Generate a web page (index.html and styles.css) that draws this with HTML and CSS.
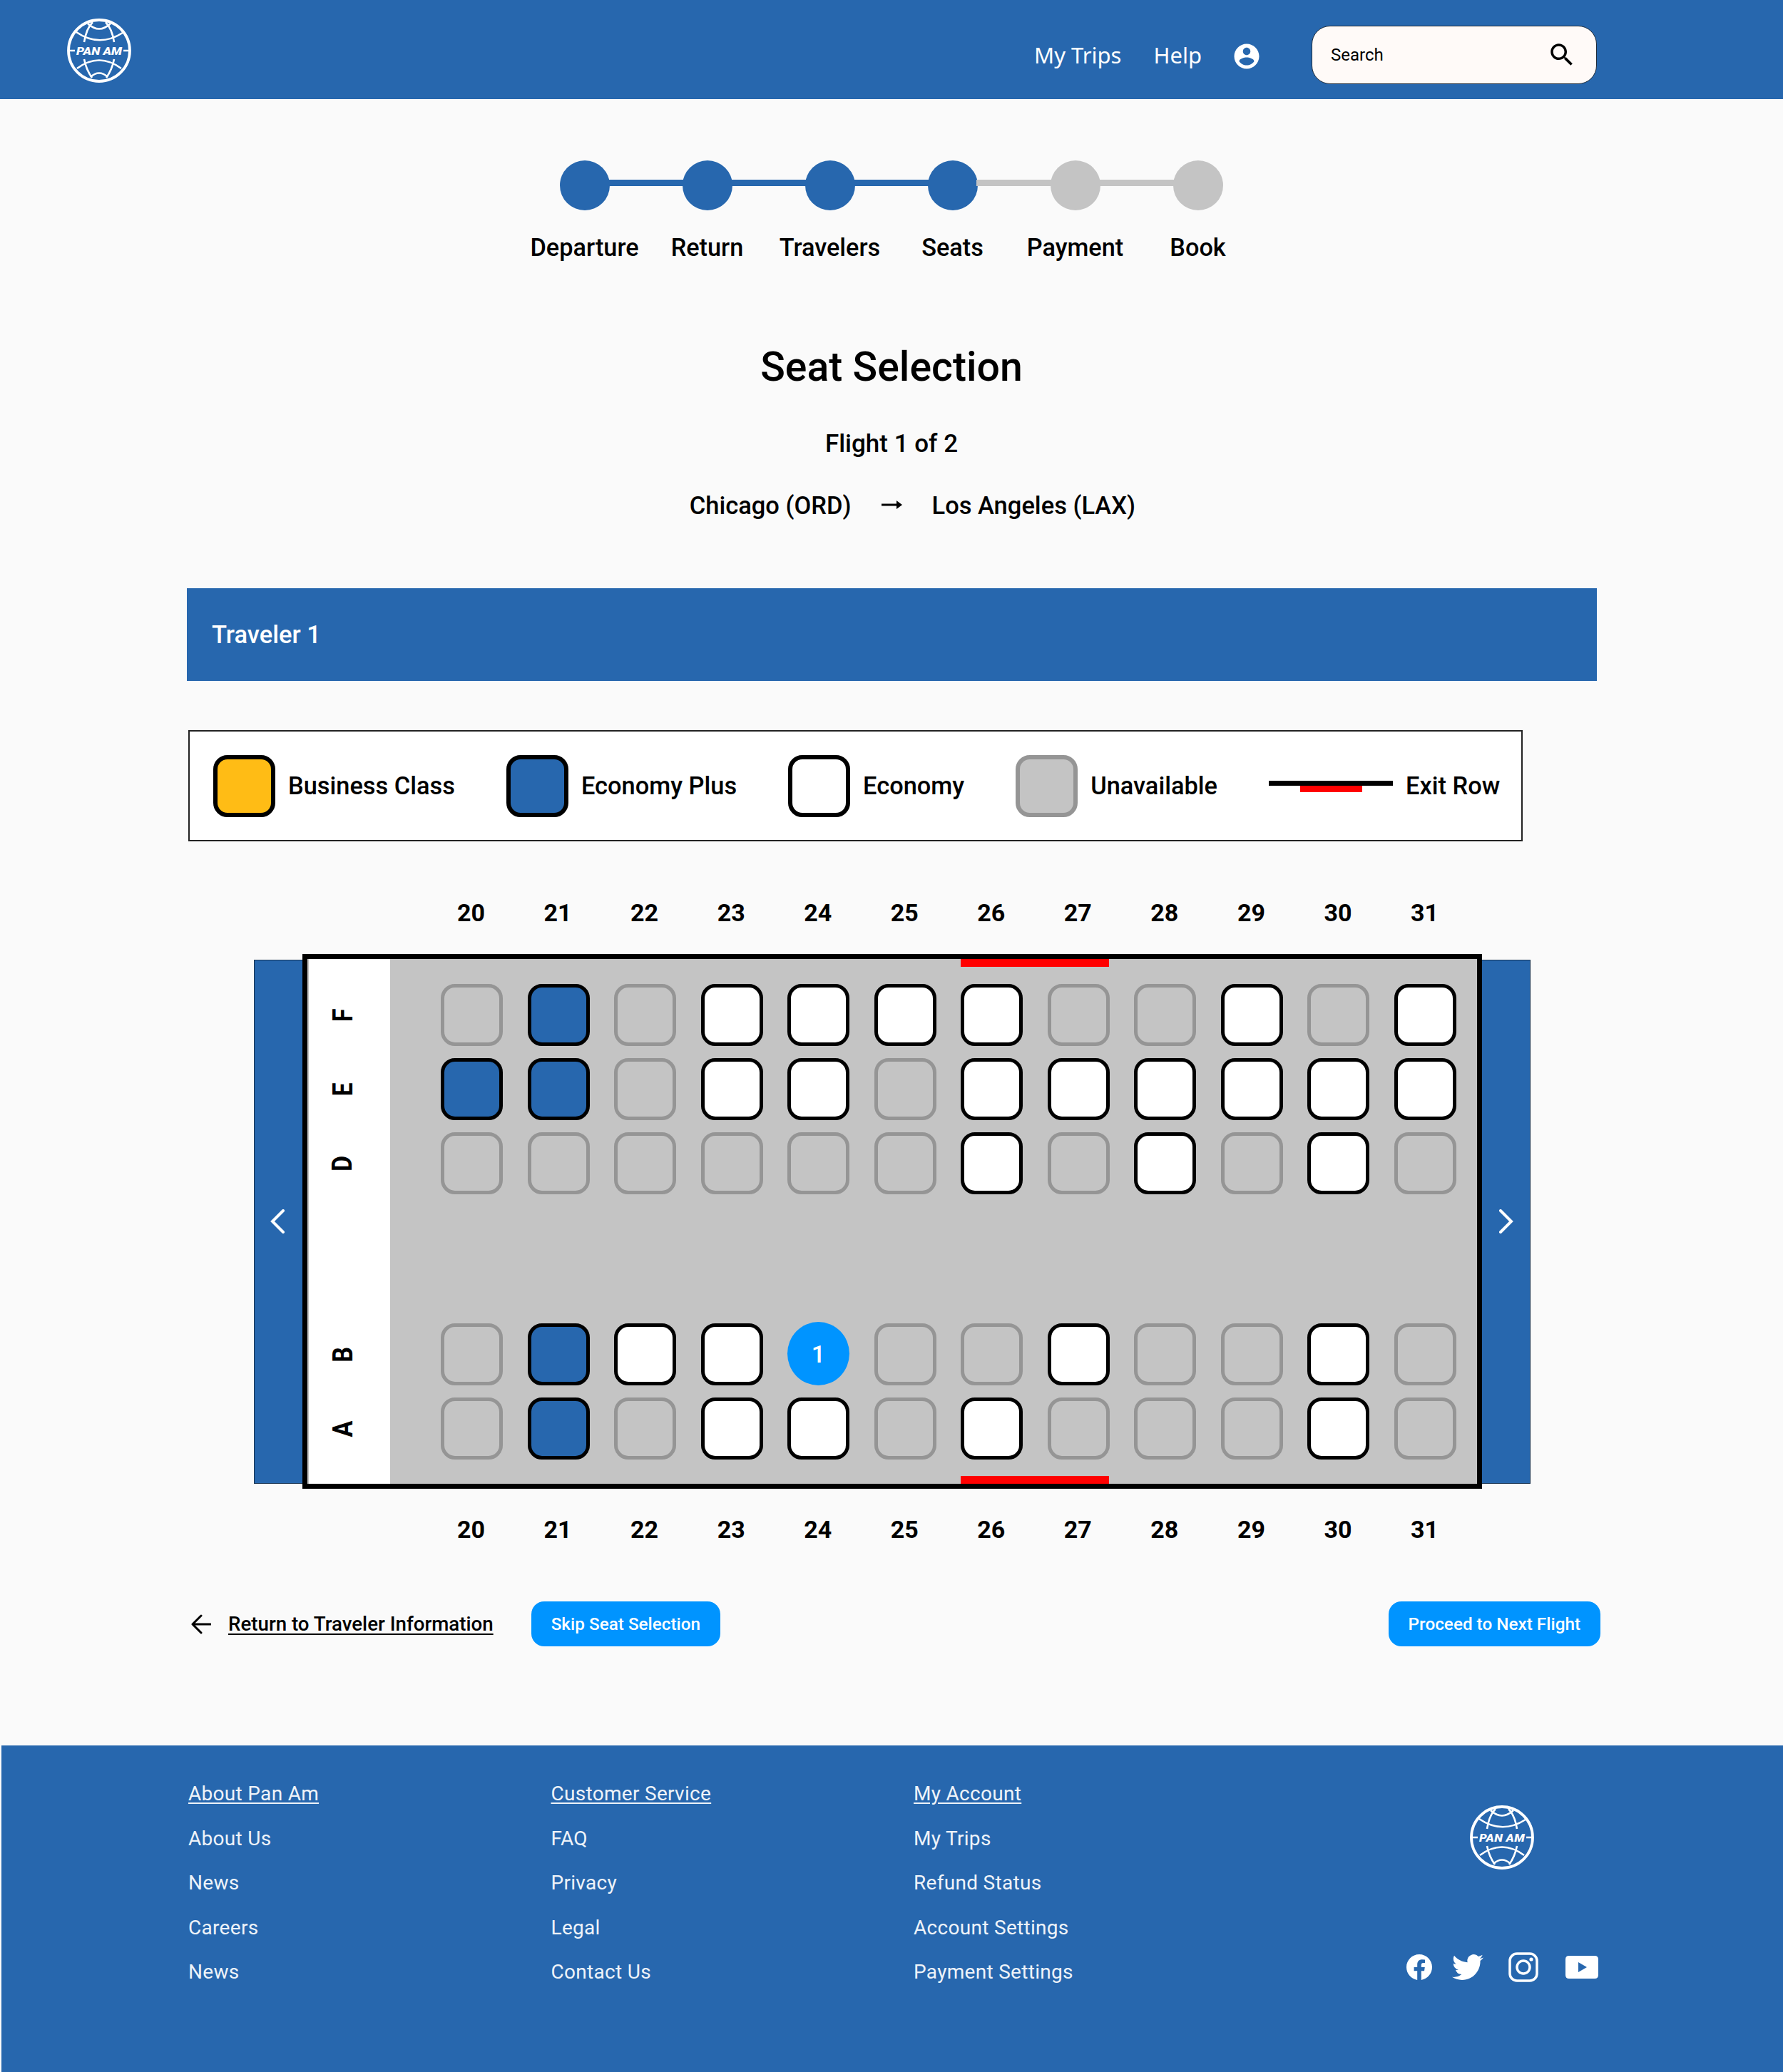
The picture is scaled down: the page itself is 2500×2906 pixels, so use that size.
FILE: index.html
```html
<!DOCTYPE html>
<html lang="en">
<head>
    <meta charset="UTF-8">
    <meta name="viewport" content="width=device-width, initial-scale=1.0">
    <title>Seat Selection</title>
    <link rel="stylesheet" href="styles.css">
</head>
<body>
    <header class="topbar">
        <svg class="logo" viewBox="0 0 90 90">
            <g fill="none" stroke="#fff" stroke-width="2.6">
                <circle cx="45" cy="45" r="43" stroke-width="3.8"/>
                <path d="M13 19 Q45 41 78 20"/>
                <path d="M29 7 Q45 22 61 7"/>
                <path d="M36 5 Q27 14 24 33"/>
                <path d="M54 5 Q63 14 66 33"/>
                <path d="M14 70 Q45 47 76 70"/>
                <path d="M33 82 Q45 71 57 82"/>
                <path d="M24 57 Q27 72 35 83"/>
                <path d="M66 57 Q63 72 55 83"/>
                <path d="M1 45 H11 M79 45 H89"/>
            </g>
            <text x="13" y="51" class="globe-text" textLength="64" lengthAdjust="spacingAndGlyphs">PAN AM</text>
        </svg>
        <nav class="topnav">
            <a href="#">My Trips</a>
            <a href="#">Help</a>
            <svg class="user-icon" viewBox="0 0 24 24"><path fill="#fff" d="M12 2C6.48 2 2 6.48 2 12s4.48 10 10 10 10-4.48 10-10S17.52 2 12 2zm0 3c1.66 0 3 1.34 3 3s-1.34 3-3 3-3-1.34-3-3 1.34-3 3-3zm0 14.2c-2.5 0-4.71-1.28-6-3.22.03-1.99 4-3.08 6-3.08 1.99 0 5.97 1.09 6 3.08-1.29 1.94-3.5 3.22-6 3.22z"/></svg>
        </nav>
        <div class="search">
            <span>Search</span>
            <svg class="search-icon" viewBox="0 0 24 24"><path d="M15.5 14h-.79l-.28-.27C15.41 12.59 16 11.11 16 9.5 16 5.91 13.09 3 9.5 3S3 5.91 3 9.5 5.91 16 9.5 16c1.61 0 3.09-.59 4.23-1.57l.27.28v.79l5 4.99L20.49 19l-4.99-5zm-6 0C7.01 14 5 11.99 5 9.5S7.01 5 9.5 5 14 7.01 14 9.5 11.99 14 9.5 14z"/></svg>
        </div>
    </header>

    <main class="page">
        <div class="stepper">
            <div class="step done"><div class="dot"></div><div class="step-name">Departure</div></div>
            <div class="step done"><div class="dot"></div><div class="step-name">Return</div></div>
            <div class="step done"><div class="dot"></div><div class="step-name">Travelers</div></div>
            <div class="step current"><div class="dot"></div><div class="step-name">Seats</div></div>
            <div class="step"><div class="dot"></div><div class="step-name">Payment</div></div>
            <div class="step last"><div class="dot"></div><div class="step-name">Book</div></div>
        </div>

        <h1 class="title">Seat Selection</h1>
        <p class="flight">Flight 1 of 2</p>
        <div class="route">
            <span class="route-from">Chicago (ORD)</span>
            <svg class="route-arrow" viewBox="0 0 29 12"><path d="M0 4.5H21V0L29 6L21 12V7.5H0Z"/></svg>
            <span class="route-to">Los Angeles (LAX)</span>
        </div>

        <div class="traveler-band">Traveler 1</div>

        <div class="legend">
            <div class="legend-item"><div class="swatch swatch-business"></div>Business Class</div>
            <div class="legend-item"><div class="swatch swatch-plus"></div>Economy Plus</div>
            <div class="legend-item"><div class="swatch swatch-economy"></div>Economy</div>
            <div class="legend-item"><div class="swatch swatch-unavail"></div>Unavailable</div>
            <div class="legend-item"><div class="exit-mark"><div class="exit-line"></div><div class="exit-red"></div></div>Exit Row</div>
        </div>

        <div class="col-numbers">
            <span>20</span><span>21</span><span>22</span><span>23</span><span>24</span><span>25</span><span>26</span><span>27</span><span>28</span><span>29</span><span>30</span><span>31</span>
        </div>

        <div class="seatmap">
            <div class="side side-left">
                <svg class="chevron" viewBox="0 0 20 34"><path d="M18 2L3 17L18 32"/></svg>
            </div>
            <div class="fuselage">
                <div class="row-labels">
                    <div class="row-label"><span>F</span></div>
                    <div class="row-label"><span>E</span></div>
                    <div class="row-label"><span>D</span></div>
                    <div class="row-label aisle-after"><span>B</span></div>
                    <div class="row-label"><span>A</span></div>
                </div>
                <div class="cabin">
                    <div class="exit-bar exit-top"></div>
                    <div class="seats">
                        <!-- row F -->
                        <div class="seat unavail"></div><div class="seat plus"></div><div class="seat unavail"></div><div class="seat econ"></div><div class="seat econ"></div><div class="seat econ"></div><div class="seat econ"></div><div class="seat unavail"></div><div class="seat unavail"></div><div class="seat econ"></div><div class="seat unavail"></div><div class="seat econ"></div>
                        <!-- row E -->
                        <div class="seat plus"></div><div class="seat plus"></div><div class="seat unavail"></div><div class="seat econ"></div><div class="seat econ"></div><div class="seat unavail"></div><div class="seat econ"></div><div class="seat econ"></div><div class="seat econ"></div><div class="seat econ"></div><div class="seat econ"></div><div class="seat econ"></div>
                        <!-- row D -->
                        <div class="seat unavail"></div><div class="seat unavail"></div><div class="seat unavail"></div><div class="seat unavail"></div><div class="seat unavail"></div><div class="seat unavail"></div><div class="seat econ"></div><div class="seat unavail"></div><div class="seat econ"></div><div class="seat unavail"></div><div class="seat econ"></div><div class="seat unavail"></div>
                    </div>
                    <div class="seats seats-lower">
                        <!-- row B -->
                        <div class="seat unavail"></div><div class="seat plus"></div><div class="seat econ"></div><div class="seat econ"></div><div class="seat selected">1</div><div class="seat unavail"></div><div class="seat unavail"></div><div class="seat econ"></div><div class="seat unavail"></div><div class="seat unavail"></div><div class="seat econ"></div><div class="seat unavail"></div>
                        <!-- row A -->
                        <div class="seat unavail"></div><div class="seat plus"></div><div class="seat unavail"></div><div class="seat econ"></div><div class="seat econ"></div><div class="seat unavail"></div><div class="seat econ"></div><div class="seat unavail"></div><div class="seat unavail"></div><div class="seat unavail"></div><div class="seat econ"></div><div class="seat unavail"></div>
                    </div>
                    <div class="exit-bar exit-bottom"></div>
                </div>
            </div>
            <div class="side side-right">
                <svg class="chevron" viewBox="0 0 20 34"><path d="M2 2L17 17L2 32"/></svg>
            </div>
        </div>

        <div class="col-numbers col-numbers-bottom">
            <span>20</span><span>21</span><span>22</span><span>23</span><span>24</span><span>25</span><span>26</span><span>27</span><span>28</span><span>29</span><span>30</span><span>31</span>
        </div>

        <div class="actions">
            <svg class="back-arrow" viewBox="0 0 28 28"><path d="M27 14H3M14 2L2 14L14 26"/></svg>
            <a class="back-link" href="#">Return to Traveler Information</a>
            <a class="btn btn-skip" href="#">Skip Seat Selection</a>
            <a class="btn btn-next" href="#">Proceed to Next Flight</a>
        </div>
    </main>

    <footer class="footer">
        <ul class="footer-col">
            <li><a class="footer-head" href="#">About Pan Am</a></li>
            <li>About Us</li>
            <li>News</li>
            <li>Careers</li>
            <li>News</li>
        </ul>
        <ul class="footer-col">
            <li><a class="footer-head" href="#">Customer Service</a></li>
            <li>FAQ</li>
            <li>Privacy</li>
            <li>Legal</li>
            <li>Contact Us</li>
        </ul>
        <ul class="footer-col">
            <li><a class="footer-head" href="#">My Account</a></li>
            <li>My Trips</li>
            <li>Refund Status</li>
            <li>Account Settings</li>
            <li>Payment Settings</li>
        </ul>
        <div class="footer-brand">
            <svg class="logo footer-logo" viewBox="0 0 90 90">
                <g fill="none" stroke="#fff" stroke-width="2.6">
                    <circle cx="45" cy="45" r="43" stroke-width="3.8"/>
                    <path d="M13 19 Q45 41 78 20"/>
                    <path d="M29 7 Q45 22 61 7"/>
                    <path d="M36 5 Q27 14 24 33"/>
                    <path d="M54 5 Q63 14 66 33"/>
                    <path d="M14 70 Q45 47 76 70"/>
                    <path d="M33 82 Q45 71 57 82"/>
                    <path d="M24 57 Q27 72 35 83"/>
                    <path d="M66 57 Q63 72 55 83"/>
                    <path d="M1 45 H11 M79 45 H89"/>
                </g>
                <text x="13" y="51" class="globe-text" textLength="64" lengthAdjust="spacingAndGlyphs">PAN AM</text>
            </svg>
            <div class="social">
                <svg class="icon-fb" viewBox="0 0 24 24"><path fill="#fff" d="M24 12.073c0-6.627-5.373-12-12-12s-12 5.373-12 12c0 5.99 4.388 10.954 10.125 11.854v-8.385H7.078v-3.47h3.047V9.43c0-3.007 1.792-4.669 4.533-4.669 1.312 0 2.686.235 2.686.235v2.953H15.83c-1.491 0-1.956.925-1.956 1.874v2.25h3.328l-.532 3.47h-2.796v8.385C19.612 23.027 24 18.062 24 12.073z"/></svg>
                <svg class="icon-tw" viewBox="0 0 24 24"><path fill="#fff" d="M23.953 4.57a10 10 0 01-2.825.775 4.958 4.958 0 002.163-2.723c-.951.555-2.005.959-3.127 1.184a4.92 4.92 0 00-8.384 4.482C7.69 8.095 4.067 6.13 1.64 3.162a4.822 4.822 0 00-.666 2.475c0 1.71.87 3.213 2.188 4.096a4.904 4.904 0 01-2.228-.616v.06a4.923 4.923 0 003.946 4.827 4.996 4.996 0 01-2.212.085 4.936 4.936 0 004.604 3.417 9.867 9.867 0 01-6.102 2.105c-.39 0-.779-.023-1.17-.067a13.995 13.995 0 007.557 2.209c9.053 0 13.998-7.496 13.998-13.985 0-.21 0-.42-.015-.63A9.935 9.935 0 0024 4.59z"/></svg>
                <svg class="icon-ig" viewBox="0 0 42 42"><rect x="2" y="2" width="38" height="38" rx="10" fill="none" stroke="#fff" stroke-width="3.5"/><circle cx="21" cy="21" r="9" fill="none" stroke="#fff" stroke-width="3.5"/><circle cx="32" cy="10" r="2.6" fill="#fff"/></svg>
                <svg class="icon-yt" viewBox="0 0 46 32"><path fill="#fff" fill-rule="evenodd" d="M5 0H41Q46 0 46 5V27Q46 32 41 32H5Q0 32 0 27V5Q0 0 5 0ZM18 9V23L30 16Z"/></svg>
            </div>
        </div>
    </footer>
</body>
</html>
```

FILE: styles.css
```css
* {
    box-sizing: border-box;
}
body {
    margin: 0;
    background-color: #fafafa;
    color: #000;
    font-family: Roboto, "Liberation Sans", sans-serif;
}
a {
    color: inherit;
}
.globe-text {
    fill: #fff;
    font-family: Roboto, sans-serif;
    font-size: 15.5px;
    font-weight: 900;
    font-style: italic;
}

/* top bar */
.topbar {
    display: flex;
    align-items: center;
    height: 139px;
    padding: 0 261px 0 94px;
    background-color: #2767ae;
}
.logo {
    display: block;
    width: 90px;
    height: 90px;
    margin-top: 3px;
}
.topnav {
    display: flex;
    align-items: center;
    gap: 45px;
    margin: 14px 0 0 auto;
    color: #fff;
    font-family: "Noto Sans", sans-serif;
    font-size: 31px;
}
.topnav a {
    text-decoration: none;
}
.user-icon {
    width: 42px;
    height: 42px;
    margin: 2px 0 -2px -3px;
}
.search {
    display: flex;
    align-items: center;
    justify-content: space-between;
    width: 400px;
    height: 82px;
    margin: 14px 0 0 70px;
    padding: 0 27px 0 26px;
    background-color: #fffaf8;
    border: 1px solid #1e2a38;
    border-radius: 26px;
    font-size: 24px;
}
.search-icon {
    width: 42px;
    height: 42px;
}

/* stepper */
.page {
    padding: 86px 256px 0 262px;
}
.stepper {
    display: flex;
    justify-content: center;
    margin-right: 7px;
}
.step {
    display: flex;
    flex-direction: column;
    align-items: center;
    width: 172px;
}
.dot {
    position: relative;
    width: 70px;
    height: 70px;
    background-color: #c4c4c4;
    border-radius: 50%;
}
.dot::after {
    content: "";
    position: absolute;
    top: 27px;
    left: 68px;
    width: 106px;
    height: 9px;
    background-color: #c4c4c4;
}
.step.done .dot,
.step.current .dot,
.step.done .dot::after {
    background-color: #2767ae;
}
.step.last .dot::after {
    display: none;
}
.step-name {
    margin-top: 30px;
    font-size: 34.3px;
    font-weight: 500;
    line-height: 44px;
    white-space: nowrap;
}

/* headings */
.title {
    margin: 112px 6px 0 0;
    font-size: 57.2px;
    font-weight: 500;
    line-height: 68px;
    text-align: center;
}
.flight {
    margin: 52px 6px 0 0;
    font-size: 35px;
    font-weight: 500;
    line-height: 44px;
    text-align: center;
}
.route {
    display: grid;
    grid-template-columns: 1fr auto 1fr;
    align-items: center;
    gap: 42px;
    margin: 42px 6px 0 0;
    font-size: 34.5px;
    font-weight: 500;
    line-height: 44px;
}
.route-from {
    justify-self: end;
}
.route-arrow {
    width: 29px;
    height: 12px;
    margin-top: -2px;
}
.traveler-band {
    display: flex;
    align-items: center;
    width: 1977px;
    height: 130px;
    margin-top: 94px;
    padding-left: 35px;
    background-color: #2767ae;
    color: #fff;
    font-size: 34.5px;
    font-weight: 500;
}

/* legend */
.legend {
    display: flex;
    align-items: center;
    gap: 72px;
    width: 1871px;
    height: 156px;
    margin: 69px 0 0 2px;
    padding-left: 33px;
    background-color: #fff;
    border: 2px solid #222;
    font-size: 34.4px;
    font-weight: 500;
    white-space: nowrap;
}
.legend-item {
    display: flex;
    align-items: center;
    gap: 18px;
}
.swatch {
    width: 87px;
    height: 87px;
    border: 6px solid #000;
    border-radius: 20px;
}
.swatch-business {
    background-color: #ffbc15;
}
.swatch-plus {
    background-color: #2767ae;
}
.swatch-economy {
    background-color: #fff;
}
.swatch-unavail {
    background-color: #c4c4c4;
    border-color: #959595;
}
.exit-mark {
    display: flex;
    flex-direction: column;
    align-items: center;
    width: 174px;
    padding-top: 2px;
}
.exit-line {
    width: 100%;
    height: 7px;
    background-color: #000;
}
.exit-red {
    width: 87px;
    height: 9px;
    background-color: #f00;
}

/* seat map */
.col-numbers {
    display: grid;
    grid-template-columns: repeat(12, 87px);
    column-gap: 34.55px;
    margin: 78px 0 0 355px;
    font-size: 34px;
    font-weight: 700;
    line-height: 44px;
    text-align: center;
}
.col-numbers-bottom {
    margin-top: 35px;
}
.seatmap {
    display: flex;
    align-items: center;
    margin: 36px 0 0 94px;
}
.side {
    display: flex;
    align-items: center;
    justify-content: center;
    width: 68px;
    height: 735px;
    background-color: #2767ae;
    border: 1px solid #16314f;
}
.side-left {
    padding-right: 4px;
    border-right: 0;
}
.side-right {
    border-left: 0;
}
.chevron {
    width: 20px;
    height: 34px;
    fill: none;
    stroke: #fff;
    stroke-width: 4;
    stroke-linecap: round;
}
.fuselage {
    display: flex;
    width: 1654px;
    height: 750px;
    border: 7px solid #000;
}
.row-labels {
    width: 116px;
    padding-top: 35px;
    background-color: #fff;
    border-left: 2px solid #c4c4c4;
}
.row-label {
    display: flex;
    align-items: center;
    justify-content: center;
    width: 95px;
    height: 87px;
    margin-bottom: 17px;
    font-size: 34px;
    font-weight: 700;
}
.row-label span {
    transform: rotate(-90deg) scaleY(1.12);
}
.aisle-after {
    margin-top: 181px;
}
.cabin {
    position: relative;
    flex: 1;
    padding: 35px 0 0 71px;
    background-color: #c4c4c4;
}
.seats {
    display: grid;
    grid-template-columns: repeat(12, 87px);
    grid-auto-rows: 87px;
    gap: 17px 34.5px;
}
.seats-lower {
    margin-top: 181px;
}
.seat {
    border: 5px solid #000;
    border-radius: 20px;
}
.seat.unavail {
    border-color: #959595;
}
.seat.plus {
    background-color: #2767ae;
}
.seat.econ {
    background-color: #fff;
}
.seat.selected {
    display: flex;
    align-items: center;
    justify-content: center;
    margin-top: -2px;
    background-color: #0094ff;
    border: 0;
    border-radius: 50%;
    color: #fff;
    font-size: 34px;
    font-weight: 500;
}
.exit-bar {
    position: absolute;
    left: 800px;
    width: 208px;
    height: 11px;
    background-color: #f00;
}
.exit-top {
    top: 0;
}
.exit-bottom {
    bottom: 0;
}

/* actions */
.actions {
    display: flex;
    align-items: center;
    height: 63px;
    margin-top: 79px;
}
.back-arrow {
    width: 28px;
    height: 28px;
    margin: 0 24px 0 6px;
    fill: none;
    stroke: #000;
    stroke-width: 3;
    stroke-linecap: round;
    stroke-linejoin: round;
}
.back-link {
    font-size: 27.7px;
    font-weight: 500;
    text-underline-offset: 4px;
}
.btn {
    display: flex;
    align-items: center;
    height: 63px;
    padding: 0 28px;
    background-color: #0094ff;
    border-radius: 18px;
    color: #fff;
    font-size: 24.3px;
    font-weight: 500;
    text-decoration: none;
}
.btn-skip {
    margin-left: 53px;
}
.btn-next {
    margin-left: auto;
}

/* footer */
.footer {
    display: flex;
    height: 458px;
    margin: 139px 0 0 2px;
    padding: 46px 0 0 262px;
    overflow: hidden;
    background-color: #2767ae;
    color: #eef3f9;
    font-size: 28px;
    letter-spacing: 0.3px;
}
.footer-col {
    width: 508.5px;
    margin: 0;
    padding: 0;
    list-style: none;
}
.footer-col li {
    height: 62.5px;
    line-height: 44px;
}
.footer-head {
    text-underline-offset: 3px;
}
.footer-brand {
    flex: 1;
    display: flex;
    flex-direction: column;
}
.footer-logo {
    margin: 38px 0 0 271px;
}
.social {
    display: flex;
    align-items: center;
    margin: 115px 0 0 182px;
}
.icon-fb {
    width: 36px;
    height: 36px;
}
.icon-tw {
    width: 44px;
    height: 44px;
    margin-left: 28px;
}
.icon-ig {
    width: 42px;
    height: 42px;
    margin-left: 35px;
}
.icon-yt {
    width: 46px;
    height: 32px;
    margin-left: 38px;
}
```
